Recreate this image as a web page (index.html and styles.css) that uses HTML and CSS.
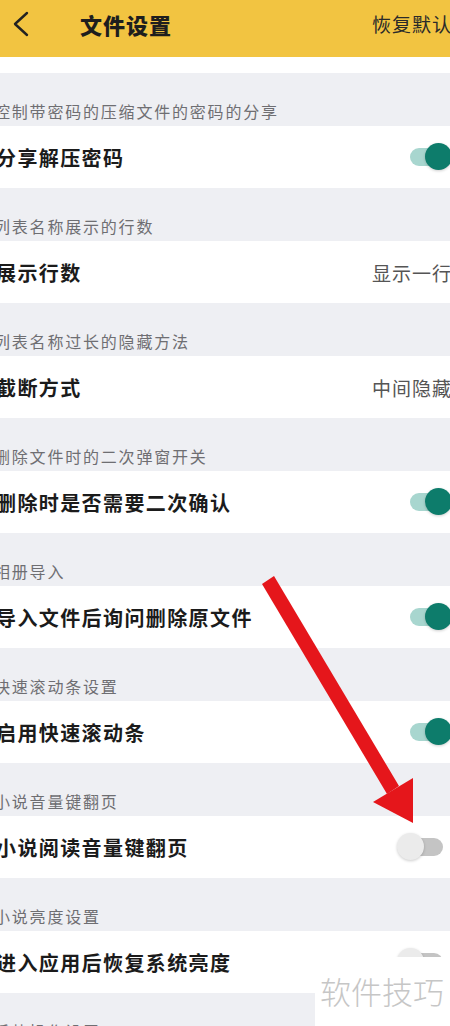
FILE: index.html
```html
<!DOCTYPE html>
<html lang="zh-CN">
  <head>
    <meta charset="UTF-8" />
    <meta name="viewport" content="width=device-width, initial-scale=1.0" />
    <title>文件设置</title>
    <link rel="stylesheet" href="styles.css">
  </head>
  <body>
    <div class="app">
      <div class="topbar">
        <svg class="back" width="18" height="26" viewBox="0 0 18 26">
          <polyline points="15,2 3,13 15,24" fill="none" stroke="#222" stroke-width="2.4" stroke-linecap="round" stroke-linejoin="round" />
        </svg>
        <div class="title">文件设置</div>
        <div class="reset">恢复默认</div>
      </div>
      <div class="strip"></div>

      <div class="section-title">控制带密码的压缩文件的密码的分享</div>
      <div class="row">
        <div class="label">分享解压密码</div>
        <div class="switch on"><span class="track"></span><span class="knob"></span></div>
      </div>

      <div class="section-title">列表名称展示的行数</div>
      <div class="row">
        <div class="label">展示行数</div>
        <div class="value">显示一行</div>
      </div>

      <div class="section-title">列表名称过长的隐藏方法</div>
      <div class="row">
        <div class="label">截断方式</div>
        <div class="value">中间隐藏</div>
      </div>

      <div class="section-title">删除文件时的二次弹窗开关</div>
      <div class="row">
        <div class="label">删除时是否需要二次确认</div>
        <div class="switch on"><span class="track"></span><span class="knob"></span></div>
      </div>

      <div class="section-title">相册导入</div>
      <div class="row">
        <div class="label">导入文件后询问删除原文件</div>
        <div class="switch on"><span class="track"></span><span class="knob"></span></div>
      </div>

      <div class="section-title">快速滚动条设置</div>
      <div class="row">
        <div class="label">启用快速滚动条</div>
        <div class="switch on"><span class="track"></span><span class="knob"></span></div>
      </div>

      <div class="section-title">小说音量键翻页</div>
      <div class="row">
        <div class="label">小说阅读音量键翻页</div>
        <div class="switch off"><span class="track"></span><span class="knob"></span></div>
      </div>

      <div class="section-title">小说亮度设置</div>
      <div class="row">
        <div class="label">进入应用后恢复系统亮度</div>
        <div class="switch off"><span class="track"></span><span class="knob"></span></div>
      </div>

      <div class="section-title">手势操作设置</div>
      <div class="row">
        <div class="label">&nbsp;</div>
      </div>
    </div>

    <svg class="arrow" width="450" height="1026" viewBox="0 0 450 1026">
      <polygon points="274,576 399,786 387,794 262,584" fill="#e5161b" />
      <polygon points="413,778 373,802 413,823" fill="#e5161b" />
    </svg>

    <div class="watermark">软件技巧</div>
  </body>
</html>
```

FILE: styles.css
```css
body {
  margin: 0;
  width: 450px;
  height: 1026px;
  overflow: hidden;
  position: relative;
  background-color: #eeeff3;
  font-family: "Noto Sans CJK SC", "Noto Sans", sans-serif;
}

.app {
  width: 470px;
}

.topbar {
  height: 57px;
  box-sizing: border-box;
  background-color: #f2c441;
  display: flex;
  align-items: center;
  padding: 0 18px 10px 12px;
}

.back {
  display: block;
}

.title {
  margin-left: 50px;
  font-size: 22px;
  letter-spacing: 1px;
  font-weight: 900;
  color: #1e1e1e;
}

.reset {
  margin-left: auto;
  font-size: 19px;
  letter-spacing: 1px;
  color: #2a2a2a;
}

.strip {
  height: 16px;
  background-color: #fff;
}

.section-title {
  height: 53px;
  box-sizing: border-box;
  display: flex;
  align-items: flex-end;
  padding-bottom: 4px;
  margin-left: -6px;
  font-size: 16px;
  line-height: 22px;
  letter-spacing: 1.8px;
  color: #6e6e72;
}

.row {
  height: 62px;
  background-color: #fff;
  display: flex;
  align-items: center;
  justify-content: space-between;
  padding-right: 18px;
}

.label {
  margin-left: -4px;
  font-size: 20px;
  letter-spacing: 1.4px;
  font-weight: 600;
  color: #1b1b1b;
}

.value {
  font-size: 19px;
  letter-spacing: 1px;
  color: #555;
}

.switch {
  position: relative;
  width: 48px;
  height: 28px;
}

.switch .track {
  position: absolute;
  left: 6px;
  top: 5px;
  width: 40px;
  height: 18px;
  border-radius: 9px;
}

.switch .knob {
  position: absolute;
  top: 0;
  width: 27px;
  height: 27px;
  border-radius: 50%;
  box-shadow: 0 1px 3px rgba(0, 0, 0, 0.2);
}

.switch.on .track {
  background-color: #a8d6cf;
}

.switch.on .knob {
  right: 0;
  background-color: #0d7c6b;
}

.switch.off {
  margin-right: 7px;
}

.switch.off .track {
  background-color: #c4c4c4;
}

.switch.off .knob {
  left: 0;
  background-color: #ebebeb;
}

.arrow {
  position: absolute;
  left: 0;
  top: 0;
}

.watermark {
  position: absolute;
  left: 315px;
  top: 957px;
  width: 135px;
  height: 69px;
  box-sizing: border-box;
  padding: 16px 0 0 5px;
  background-color: #fff;
  font-size: 31px;
  line-height: 36px;
  font-weight: 300;
  color: #c6c6c6;
  white-space: nowrap;
}
```
